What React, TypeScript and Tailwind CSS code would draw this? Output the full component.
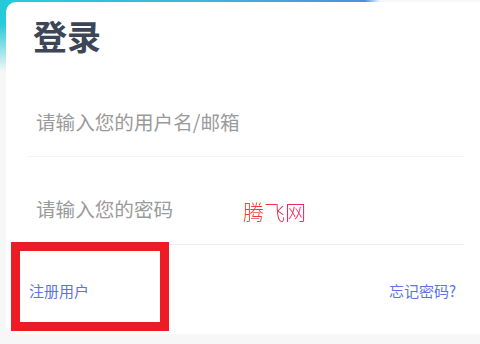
import React from "react"

export default function App() {
  return (
    <div
      className="relative h-[344px] w-[480px] overflow-hidden bg-[#f7f7f7]"
      style={{ fontFamily: '"Noto Sans CJK SC", "Noto Sans", sans-serif' }}
    >
      {/* gradient header behind the card */}
      <div className="absolute left-0 top-0 h-[80px] w-[380px] bg-[linear-gradient(to_right,#26cad9,#3fb6df_50%,#4a90e2_96%,rgba(74,144,226,0))]" />
      <div className="absolute left-0 top-0 h-[80px] w-[20px] bg-[linear-gradient(to_bottom,rgba(247,247,247,0)_30%,#f7f7f7_90%)]" />

      {/* card */}
      <div className="relative ml-[6px] mt-[2px] h-[332px] rounded-l-[10px] bg-white pl-[22px] pr-[16px]">
        <h1 className="pt-[10px] pl-[5px] text-[34px] font-bold leading-[48px] text-[#3d4657]">登录</h1>

        <div className="mt-[49px] border-b border-[#f3f4f6] pb-[21px] pl-[8px] text-[19.6px] leading-[26px] text-[#9a9a9a]">
          请输入您的用户名/邮箱
        </div>

        <div className="relative mt-[39px] border-b border-[#e8edf7] pb-[22px] pl-[8px] text-[19.6px] leading-[26px] text-[#9a9a9a]">
          请输入您的密码
          <span
            className="absolute left-[215px] top-[2px] bg-[linear-gradient(to_right,#f0452f,#f2206a)] bg-clip-text text-[21px] leading-[26px] text-transparent"
            style={{ fontFamily: '"Noto Sans CJK SC", sans-serif', fontWeight: 300 }}
          >
            腾飞网
          </span>
        </div>

        <div className="mt-[36px] flex items-center justify-between pl-[1px] pr-[8px] text-[15px] leading-[20px] text-[#5b73e8]">
          <span>注册用户</span>
          <span>忘记密码?</span>
        </div>
      </div>

      {/* red annotation box */}
      <div className="absolute left-[11px] top-[242px] h-[89px] w-[158px] border-[9px] border-[#ed1c24]" />
    </div>
  )
}
